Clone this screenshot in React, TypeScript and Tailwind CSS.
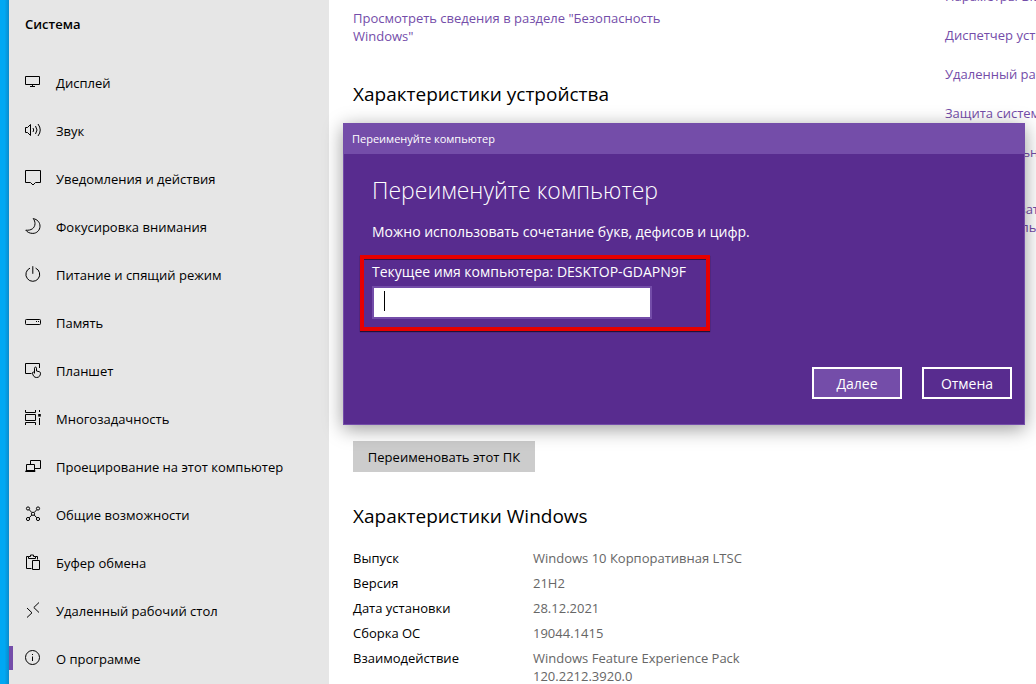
import type { ReactNode } from "react";

type NavItem = { label: string; icon: ReactNode; active?: boolean };

const navItems: NavItem[] = [
  {
    label: "Дисплей",
    icon: <path d="M.5 2.5h14v8H.5zM7.5 10.5v2M5 12.5h5" />,
  },
  {
    label: "Звук",
    icon: (
      <path d="M.5 5.5h2L5.5 2.5v11L2.5 10.5h-2zM8 6q1.400 2 0 4M10.500 4q3 4 0 8M13 2q4.500 6 0 12" />
    ),
  },
  {
    label: "Уведомления и действия",
    icon: <path d="M.5.5h15v12h-5L8 15l-2.500-2.500h-5z" />,
  },
  {
    label: "Фокусировка внимания",
    icon: (
      <path d="M8.200.6C12.300 1.300 15 4.400 15 8.200c0 4-3.200 7.200-7.200 7.200-3 0-5.600-1.200-7-3.200 5.400.5 9-2 9.200-6.500C10 3.800 9.400 2 8.200.6z" />
    ),
  },
  {
    label: "Питание и спящий режим",
    icon: <path d="M5 2.100A6.900 6.900 0 1 0 10.600 2.100M7.800.2v7.600" />,
  },
  {
    label: "Память",
    icon: (
      <>
        <rect x=".5" y="5.5" width="15" height="5" rx=".8" />
        <path d="M11 7.500h1M13 7.500h1" />
      </>
    ),
  },
  {
    label: "Планшет",
    icon: (
      <path d="M6.500 11.500h-6v-10h14V6M9.500 11.500V6.200c0-1.500 2-1.500 2 0V9l2.800.7q1.200.3 1.200 1.500c0 2.600-1.500 4.300-3.800 4.300-2.500 0-3.600-1.500-4.200-4.300-.2-1.400 1.200-1.700 2-.4" />
    ),
  },
  {
    label: "Многозадачность",
    icon: (
      <>
        <path d="M.5 0v2.500h10V0M.5 4.500h10v6h-10zM.5 15v-2.500h10V15M14.500 0v2M14.500 8v7" />
        <path d="M13.200 5.300h2.600" strokeWidth="2.600" />
      </>
    ),
  },
  {
    label: "Проецирование на этот компьютер",
    icon: <path d="M5.500 6V2.500h10v8H10M1.500 12.500v-6h8v6M.5 13.500h9.500v-1H1z" />,
  },
  {
    label: "Общие возможности",
    icon: (
      <>
        <circle cx="3" cy="2.500" r="1.600" />
        <circle cx="13" cy="2.500" r="1.600" />
        <circle cx="3" cy="13" r="1.600" />
        <circle cx="13" cy="13" r="1.600" />
        <circle cx="8" cy="7.800" r="1.600" />
        <path d="M4.200 3.700l2.600 2.800M11.800 3.700L9.200 6.500M4.200 11.800l2.600-2.800M11.800 11.800L9.200 9" />
      </>
    ),
  },
  {
    label: "Буфер обмена",
    icon: (
      <path d="M6.500 14.500h-5v-12h2M10.500 2.500h2v3M3.500 4.500v-2h2v-1.500h3v1.500h2v2zM7.500 6.500h7v9h-7z" />
    ),
  },
  {
    label: "Удаленный рабочий стол",
    icon: <path d="M2 6l5 4.800L2 15.500M14 .5L8.800 5.500 14 10.500" />,
  },
  {
    label: "О программе",
    active: true,
    icon: (
      <>
        <circle cx="7.500" cy="7.500" r="7" />
        <path d="M7.500 6.500v4.500M7.500 4v1" />
      </>
    ),
  },
];

const specs = [
  { name: "Выпуск", value: "Windows 10 Корпоративная LTSC" },
  { name: "Версия", value: "21H2" },
  { name: "Дата установки", value: "28.12.2021" },
  { name: "Сборка ОС", value: "19044.1415" },
  { name: "Взаимодействие", value: "Windows Feature Experience Pack 120.2212.3920.0" },
];

const relatedLinks = [
  "Параметры BitLocker",
  "Диспетчер устройств",
  "Удаленный рабочий стол",
  "Защита системы",
  "Дополнительные параметры системы",
  "Переименовать этот ПК (для опытных пользователей)",
];

function Sidebar() {
  return (
    <nav aria-label="Система" className="w-80 shrink-0 bg-[#e6e6e6]">
      <h2 className="flex h-[59px] items-start px-4 pt-[15px] text-[13px] leading-[18px] font-semibold">
        Система
      </h2>
      <ul>
        {navItems.map((item) => (
          <li key={item.label}>
            <a
              href="#"
              aria-current={item.active ? "page" : undefined}
              className="flex h-12 items-center"
            >
              <span className={item.active ? "mb-0.5 h-6 w-1 bg-[#744da9]" : "h-6 w-1"} />
              <svg
                viewBox="0 0 16 16"
                className="mb-0.5 ml-3 size-4 shrink-0 overflow-visible fill-none stroke-black stroke-1"
                aria-hidden="true"
              >
                {item.icon}
              </svg>
              <span className="ml-[15px]">{item.label}</span>
            </a>
          </li>
        ))}
      </ul>
    </nav>
  );
}

function RenameDialog() {
  return (
    <div
      role="dialog"
      aria-labelledby="rename-title"
      className="absolute top-[123px] right-[11px] left-[343px] border border-[#744da9] bg-[#582c8f] text-white shadow-[0_4px_18px_rgba(0,0,0,0.4)]"
    >
      <div className="flex h-[30px] items-center bg-[#744da9] px-2 text-[11px]">
        Переименуйте компьютер
      </div>
      <form className="pr-3 pb-[25px] pl-4" onSubmit={(e) => e.preventDefault()}>
        <h1
          id="rename-title"
          className="px-3 pt-[20px] text-[23px] leading-8 font-light"
        >
          Переименуйте компьютер
        </h1>
        <p className="mt-4 px-3 text-[14px] leading-5">
          Можно использовать сочетание букв, дефисов и цифр.
        </p>
        <div className="mt-[13px] h-[76px] w-[350px] border-4 border-[#e60000] px-2 pt-[3px] shadow-[0_1px_1px_rgba(0,0,0,0.6),inset_0_1px_0_rgba(0,0,0,0.5)]">
          <label htmlFor="pc-name" className="block text-[14px] leading-5">
            Текущее имя компьютера: DESKTOP-GDAPN9F
          </label>
          <div className="relative mt-1 w-[280px]">
            <input
              id="pc-name"
              type="text"
              className="block h-[33px] w-full border-2 border-[#744da9] bg-white px-2.5 text-[14px] text-black outline-none"
            />
            <span className="absolute top-[5px] left-3 h-5 w-px bg-black" />
          </div>
        </div>
        <div className="mt-9 flex justify-end gap-5 text-[14px]">
          <button type="submit" className="h-8 w-[90px] border-2 border-white bg-[#744da9] pt-px">
            Далее
          </button>
          <button type="button" className="h-8 w-[90px] border-2 border-white pt-px">
            Отмена
          </button>
        </div>
      </form>
    </div>
  );
}

export default function App() {
  return (
    <div className="relative flex h-screen overflow-hidden bg-white font-['Open_Sans','Noto_Sans',sans-serif] text-[13px] leading-[18px] text-black">
      <div className="w-[9px] shrink-0 bg-linear-to-r from-[#00a8f3] from-50% to-[#0a8bcc]" />
      <Sidebar />
      <main className="flex min-w-0 flex-1 justify-between pl-6">
        <div className="w-[420px] shrink-0 pt-[9px]">
          <a href="#" className="block w-[340px] text-[#744da9]">
            Просмотреть сведения в разделе "Безопасность Windows"
          </a>
          <section className="h-[396px] pt-[35px]">
            <h2 className="text-[19px] leading-7">Характеристики устройства</h2>
          </section>
          <button type="button" className="block h-[31px] w-[182px] bg-[#cccccc]">
            Переименовать этот ПК
          </button>
          <section className="pt-[30px]">
            <h2 className="text-[19px] leading-7">Характеристики Windows</h2>
            <dl className="mt-[19px] grid grid-cols-[180px_220px] gap-y-[7px]">
              {specs.map((spec) => (
                <div key={spec.name} className="col-span-2 grid grid-cols-subgrid">
                  <dt>{spec.name}</dt>
                  <dd className="text-[#666666]">{spec.value}</dd>
                </div>
              ))}
            </dl>
          </section>
        </div>
        <aside className="-mt-[13px] -mr-[112px] w-[203px] shrink-0">
          <ul className="flex flex-col gap-[21px]">
            {relatedLinks.map((link) => (
              <li key={link}>
                <a href="#" className="block text-[#744da9]">
                  {link}
                </a>
              </li>
            ))}
          </ul>
        </aside>
      </main>
      <RenameDialog />
    </div>
  );
}
